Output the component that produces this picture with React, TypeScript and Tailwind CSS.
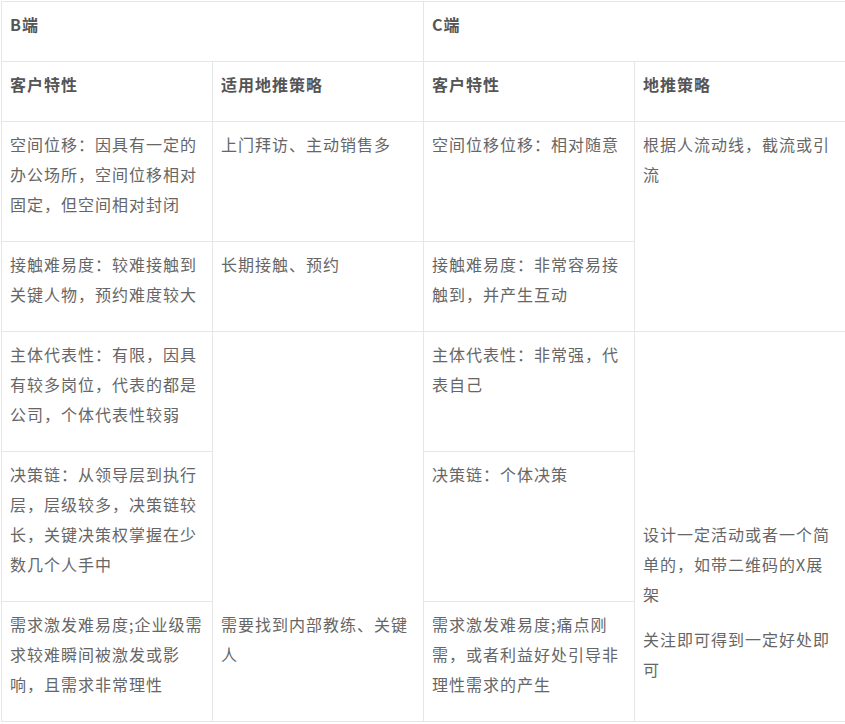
const cell = "border-r border-b border-[#e6e6e6] pl-2 pr-2 pt-[7px]";
const head = `${cell} font-bold text-[#555]`;

export default function App() {
  return (
    <div className="min-h-screen bg-white font-['Noto_Sans_CJK_SC','Noto_Sans_CJK_TC',sans-serif] text-[16px] leading-[30px] tracking-[1px] text-[#666]">
      <div className="ml-[1px] mt-[1px] grid w-[845px] grid-cols-[211px_211px_211px_211px] grid-rows-[60px_60px_120px_90px_120px_150px_120px] border-l border-t border-[#e6e6e6]">
        {/* 端 headers */}
        <div className={`${head} col-span-2`}>B端</div>
        <div className={`${head} col-span-2`}>C端</div>

        <div className={head}>客户特性</div>
        <div className={head}>适用地推策略</div>
        <div className={head}>客户特性</div>
        <div className={head}>地推策略</div>

        {/* row 1 */}
        <div className={cell}>空间位移：因具有一定的办公场所，空间位移相对固定，但空间相对封闭</div>
        <div className={cell}>上门拜访、主动销售多</div>
        <div className={cell}>空间位移位移：相对随意</div>
        <div className={`${cell} row-span-2`}>根据人流动线，截流或引流</div>

        {/* row 2 */}
        <div className={cell}>接触难易度：较难接触到关键人物，预约难度较大</div>
        <div className={cell}>长期接触、预约</div>
        <div className={cell}>接触难易度：非常容易接触到，并产生互动</div>

        {/* row 3 */}
        <div className={cell}>主体代表性：有限，因具有较多岗位，代表的都是公司，个体代表性较弱</div>
        <div className={`${cell} row-span-3 !pt-[277px]`}>需要找到内部教练、关键人</div>
        <div className={cell}>主体代表性：非常强，代表自己</div>
        <div className={`${cell} row-span-3 !pt-[187px]`}>
          <p>设计一定活动或者一个简单的，如带二维码的X展架</p>
          <p className="mt-[15px]">关注即可得到一定好处即可</p>
        </div>

        {/* row 4 */}
        <div className={cell}>决策链：从领导层到执行层，层级较多，决策链较长，关键决策权掌握在少数几个人手中</div>
        <div className={cell}>决策链：个体决策</div>

        {/* row 5 */}
        <div className={cell}>需求激发难易度;企业级需求较难瞬间被激发或影响，且需求非常理性</div>
        <div className={cell}>需求激发难易度;痛点刚需，或者利益好处引导非理性需求的产生</div>
      </div>
    </div>
  );
}
